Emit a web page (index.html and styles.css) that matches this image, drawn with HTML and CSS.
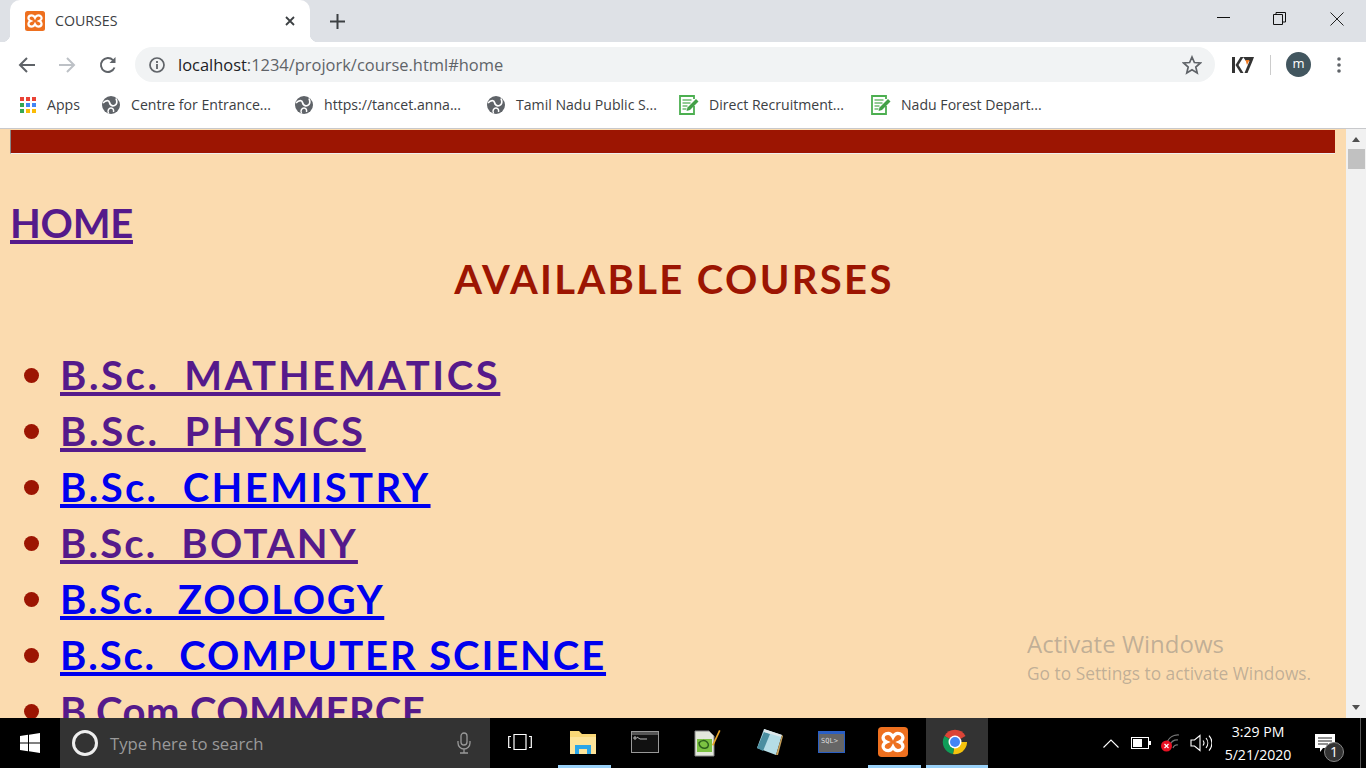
FILE: index.html
```html
<!DOCTYPE html>
<html lang="en">
  <head>
    <meta charset="UTF-8" />
    <title>COURSES</title>
    <link rel="stylesheet" href="styles.css">
  </head>
  <body>
    <svg class="defs">
      <symbol id="xampp" viewBox="0 0 20 20">
        <rect x="0" y="0" width="20" height="20" rx="2.500" fill="#ee701f"/>
        <path d="M6.800 4.300C4.500 4.300 3.400 5.800 3.400 7.200c0 1.300.9 2.200 2.300 2.800-1.400.6-2.300 1.500-2.300 2.800 0 1.400 1.100 2.900 3.400 2.900 1.500 0 2.500-1 3.200-2.400.7 1.400 1.700 2.400 3.200 2.400 2.300 0 3.400-1.500 3.400-2.900 0-1.300-.9-2.200-2.300-2.800 1.400-.6 2.300-1.500 2.300-2.800 0-1.400-1.100-2.900-3.400-2.900-1.500 0-2.500 1-3.200 2.400-.7-1.400-1.700-2.400-3.200-2.400z" fill="none" stroke="#fff" stroke-width="2.200"/>
      </symbol>
      <symbol id="globe" viewBox="0 0 18 18">
        <circle cx="9" cy="9" r="9" fill="#5f6368"/>
        <path d="M1 7c3-3 6-3 6.500-.5S10 10.500 12.500 9.500 15.500 6 14 2.500" fill="none" stroke="#fff" stroke-width="1.700"/>
        <path d="M6.500 17.500c-1.500-3 .5-5.500 2.500-5.500s3 1.800 2.500 4" fill="none" stroke="#fff" stroke-width="1.500"/>
      </symbol>
      <symbol id="doc" viewBox="0 0 20 20">
        <path d="M15 4V1H1v18h14v-8" fill="none" stroke="#4caf50" stroke-width="1.800"/>
        <path d="M3.500 5h9M3.500 8h8M3.500 11h5M3.500 14h4" stroke="#6dbb70" stroke-width="1.400"/>
        <path d="M7.500 16l1-3.500 8.500-8.500 2.500 2.500-8.500 8.500z" fill="#43a047"/>
      </symbol>
    </svg>

    <div class="tabstrip">
      <div class="tab">
        <svg class="tab-icon"><use href="#xampp"/></svg>
        <span class="tab-title">COURSES</span>
        <svg class="tab-close" viewBox="0 0 10 10"><path d="M1 1l8 8M9 1l-8 8" stroke="#3c4043" stroke-width="1.800"/></svg>
      </div>
      <svg class="new-tab" viewBox="0 0 15 15"><path d="M7.500 0v15M0 7.500h15" stroke="#3c4043" stroke-width="2"/></svg>
      <div class="win-controls">
        <svg viewBox="0 0 46 14"><path d="M17 5.500h13" stroke="#111" stroke-width="1"/></svg>
        <svg viewBox="0 0 46 14"><path d="M17.500 2.500h9v10h-9zM20 2.500V.5h9.500v9.500h-3" fill="none" stroke="#111" stroke-width="1"/></svg>
        <svg viewBox="0 0 46 14"><path d="M16.500 .5l13 13M29.500 .5l-13 13" stroke="#222" stroke-width="1"/></svg>
      </div>
    </div>

    <div class="toolbar">
      <svg class="nav-btn" viewBox="0 0 20 20"><path d="M18 10H3M10 3l-7 7 7 7" fill="none" stroke="#5f6368" stroke-width="2"/></svg>
      <svg class="nav-btn" viewBox="0 0 20 20"><path d="M2 10h15M10 3l7 7-7 7" fill="none" stroke="#bdc1c6" stroke-width="2"/></svg>
      <svg class="nav-btn reload" viewBox="0 0 20 20"><path d="M16.500 12.500a7 7 0 1 1-1.500-7.400" fill="none" stroke="#5f6368" stroke-width="2"/><path d="M17.500 2v6h-6z" fill="#5f6368"/></svg>
      <div class="omnibox">
        <svg class="info" viewBox="0 0 16 16"><circle cx="8" cy="8" r="7" fill="none" stroke="#5f6368" stroke-width="1.700"/><path d="M8 7v5M8 4v2" stroke="#5f6368" stroke-width="1.800"/></svg>
        <span class="url"><span class="host">localhost</span>:1234/projork/course.html#home</span>
        <svg class="star" viewBox="0 0 20 20"><path d="M10 2l2.400 5.500 6 .5-4.600 4 1.400 5.900L10 14.800l-5.200 3.100 1.400-5.900-4.600-4 6-.5z" fill="none" stroke="#5f6368" stroke-width="1.700"/></svg>
      </div>
      <svg class="k7" viewBox="0 0 22 18">
        <path d="M0 1h3v16H0zM3.500 9l5-8h3l-5 8 5 8h-3z" fill="#333"/>
        <path d="M11 1h11l-1.500 4H14z" fill="#333"/>
        <path d="M13.500 4h4l-2.500 5z" fill="#f47b20"/>
        <path d="M17.500 5h3l-5 12h-3z" fill="#333"/>
      </svg>
      <span class="tool-divider"></span>
      <span class="avatar">m</span>
      <svg class="dots" viewBox="0 0 4 18"><circle cx="2" cy="3" r="1.800"/><circle cx="2" cy="9" r="1.800"/><circle cx="2" cy="15" r="1.800"/></svg>
    </div>

    <div class="bookmarks">
      <a class="bookmark">
        <svg class="apps" viewBox="0 0 16 16">
          <g fill="#ea4335"><rect x="0" y="0" width="4" height="4"/><rect x="6" y="0" width="4" height="4"/><rect x="12" y="0" width="4" height="4"/></g>
          <g fill="#34a853"><rect x="0" y="6" width="4" height="4"/></g>
          <g fill="#4285f4"><rect x="6" y="6" width="4" height="4"/><rect x="12" y="6" width="4" height="4"/></g>
          <g fill="#34a853"><rect x="0" y="12" width="4" height="4"/></g>
          <g fill="#fbbc05"><rect x="6" y="12" width="4" height="4"/><rect x="12" y="12" width="4" height="4"/></g>
        </svg>
        Apps
      </a>
      <a class="bookmark"><svg class="mark-icon"><use href="#globe"/></svg>Centre for Entrance...</a>
      <a class="bookmark"><svg class="mark-icon"><use href="#globe"/></svg>https://tancet.anna...</a>
      <a class="bookmark"><svg class="mark-icon"><use href="#globe"/></svg>Tamil Nadu Public S...</a>
      <a class="bookmark"><svg class="mark-icon doc"><use href="#doc"/></svg>Direct Recruitment...</a>
      <a class="bookmark"><svg class="mark-icon doc"><use href="#doc"/></svg>Nadu Forest Depart...</a>
    </div>

    <div class="viewport">
      <div class="page">
        <div class="top-bar"></div>
        <a class="home visited" href="#home">HOME</a>
        <h1>AVAILABLE COURSES</h1>
        <ul class="courses">
          <li><a class="visited" href="#">B.Sc.&nbsp; MATHEMATICS</a></li>
          <li><a class="visited" href="#">B.Sc.&nbsp; PHYSICS</a></li>
          <li><a class="fresh" href="#">B.Sc.&nbsp; CHEMISTRY</a></li>
          <li><a class="visited" href="#">B.Sc.&nbsp; BOTANY</a></li>
          <li><a class="fresh" href="#">B.Sc.&nbsp; ZOOLOGY</a></li>
          <li><a class="fresh" href="#">B.Sc.&nbsp; COMPUTER SCIENCE</a></li>
          <li><a class="visited" href="#">B.Com COMMERCE</a></li>
        </ul>
        <div class="activate">
          <div class="activate-title">Activate Windows</div>
          <div class="activate-sub">Go to Settings to activate Windows.</div>
        </div>
      </div>
      <div class="scrollbar">
        <span class="arrow-up"></span>
        <span class="thumb"></span>
        <span class="arrow-down"></span>
      </div>
    </div>

    <div class="taskbar">
      <div class="start">
        <svg viewBox="0 0 20 20" width="20" height="20"><path d="M0 3l8-1.200V9.500H0zM9 1.700L20 0v9.500H9zM0 10.500h8v7.700L0 17zM9 10.500h11V20L9 18.300z" fill="#fff"/></svg>
      </div>
      <div class="search">
        <span class="cortana"></span>
        <span class="search-text">Type here to search</span>
        <svg class="mic" viewBox="0 0 16 22"><rect x="5" y="1" width="6" height="12" rx="3" fill="none" stroke="#999" stroke-width="1.300"/><path d="M2 9v2a6 6 0 0 0 12 0V9M8 17v4M4 21h8" fill="none" stroke="#999" stroke-width="1.300"/></svg>
      </div>
      <div class="task task-view"><svg viewBox="0 0 24 18" width="24" height="18"><path d="M6 1.500h12v15H6zM3 3.500H.7v11H3M21 3.500h2.300v11H21" fill="none" stroke="#fff" stroke-width="1.200"/></svg></div>
      <div class="task running">
        <svg viewBox="0 0 28 26" width="28" height="26"><path d="M1 2h9l3 3h14v20H1z" fill="#f9d776"/><path d="M1 8h26v17H1z" fill="#fde49a"/><path d="M6 25v-9h16v9h-4v-5h-8v5z" fill="#2aa6e8"/></svg>
      </div>
      <div class="task">
        <svg viewBox="0 0 28 22" width="28" height="22"><rect x=".5" y=".5" width="27" height="21" fill="#111" stroke="#999"/><rect x="1" y="1" width="26" height="3" fill="#555"/><path d="M3 6h2v2H3zM6 6l3 2M9 8h7" stroke="#bbb" stroke-width="1" fill="none"/></svg>
      </div>
      <div class="task">
        <svg viewBox="0 0 30 30" width="30" height="30"><path d="M3 4h14l5 5v20H3z" fill="#e4e8dc" stroke="#888"/><path d="M5 12h15v13H5z" fill="#7cc242"/><path d="M7 16c2-3 6-3 8-1s2 5-1 6-7-1-7-5z" fill="none" stroke="#2d5f1c" stroke-width="1.500"/><path d="M20 18l7-15 1.500 .8-7 15z" fill="#e8a526"/></svg>
      </div>
      <div class="task">
        <svg viewBox="0 0 28 28" width="28" height="28"><path d="M9 1l18 6-6 20L2 20z" fill="#b5dde6"/><path d="M2 20L9 4l6 2-7 17z" fill="#4a8ea0"/><path d="M9 1l18 6-1 2L9 4z" fill="#dfe8ea"/><path d="M21 27l6-20 1 1-5 19z" fill="#c9a15a"/></svg>
      </div>
      <div class="task">
        <svg viewBox="0 0 27 22" width="27" height="22"><rect x=".5" y=".5" width="26" height="21" fill="#666" stroke="#2a5fc4"/><rect x="1" y="1" width="25" height="2" fill="#2a5fc4"/><text x="3" y="12" class="sql-text">SQL&gt;</text></svg>
      </div>
      <div class="task running">
        <svg width="30" height="30"><use href="#xampp"/></svg>
      </div>
      <div class="task running active">
        <svg viewBox="0 0 28 28" width="28" height="28">
          <path d="M14 14L3.500 8A12 12 0 0 1 24.500 8z" fill="#db4437"/>
          <path d="M14 14h12A12 12 0 0 1 12 26z" fill="#f4c20d"/>
          <path d="M14 14L12 26A12 12 0 0 1 3.500 8z" fill="#0f9d58"/>
          <circle cx="14" cy="14" r="6.500" fill="#fff"/>
          <circle cx="14" cy="14" r="5" fill="#4285f4"/>
        </svg>
      </div>
      <div class="tray">
        <span class="tray-item"><svg viewBox="0 0 16 9" width="16" height="9"><path d="M.5 8.500L8 1l7.500 7.500" fill="none" stroke="#fff" stroke-width="1.100"/></svg></span>
        <span class="tray-item"><svg viewBox="0 0 20 12" width="20" height="12"><rect x=".5" y=".5" width="17" height="11" fill="none" stroke="#fff"/><rect x="2" y="2" width="9" height="8" fill="#fff"/><rect x="18" y="4" width="2" height="4" fill="#fff"/></svg></span>
        <span class="tray-item"><svg viewBox="0 0 20 18" width="20" height="18"><path d="M6 8a12 12 0 0 1 12-7M9 11a8 8 0 0 1 8-5M12 14a4 4 0 0 1 5-3" fill="none" stroke="#777" stroke-width="1.200"/><circle cx="5.500" cy="12" r="5.500" fill="#e81123"/><path d="M3.500 10l4 4M7.500 10l-4 4" stroke="#fff" stroke-width="1.200"/></svg></span>
        <span class="tray-item"><svg viewBox="0 0 22 18" width="22" height="18"><path d="M1 6h3.500L10 1.500v15L4.500 12H1z" fill="none" stroke="#fff" stroke-width="1.100"/><path d="M13 6.500a4 4 0 0 1 0 5M16 4a8 8 0 0 1 0 10M19 1.500a11 11 0 0 1 0 15" fill="none" stroke="#fff" stroke-width="1.100"/></svg></span>
        <div class="clock">
          <div>3:29 PM</div>
          <div>5/21/2020</div>
        </div>
        <div class="notify">
          <svg viewBox="0 0 20 18" width="20" height="18"><path d="M0 0h20v14H8l-3 4v-4H0z" fill="#fff"/><path d="M3 4h14M3 7h14M3 10h10" stroke="#222" stroke-width="1"/></svg>
          <span class="notify-count">1</span>
        </div>
        <span class="show-desktop"></span>
      </div>
    </div>
  </body>
</html>
```

FILE: styles.css
```css
body {
  font-family: "Open Sans", sans-serif;
  margin: 0;
  padding: 0;
  width: 1366px;
  height: 768px;
  overflow: hidden;
  display: flex;
  flex-direction: column;
  background-color: #fff;
}
.defs {
  display: none;
}

/* tab strip */
.tabstrip {
  height: 42px;
  flex: none;
  display: flex;
  align-items: center;
  padding-left: 10px;
  background-color: #dee1e6;
}
.tab {
  position: relative;
  width: 300px;
  height: 42px;
  box-sizing: border-box;
  padding: 0 13px 0 15px;
  display: flex;
  align-items: center;
  background-color: #fff;
  border-radius: 10px 10px 0 0;
}
.tab::before,
.tab::after {
  content: "";
  position: absolute;
  bottom: 0;
  width: 8px;
  height: 8px;
}
.tab::before {
  left: -8px;
  background: radial-gradient(circle at 0 0, transparent 8px, #fff 8.5px);
}
.tab::after {
  right: -8px;
  background: radial-gradient(circle at 100% 0, transparent 8px, #fff 8.5px);
}
.tab-icon {
  width: 20px;
  height: 20px;
  flex: none;
}
.tab-title {
  flex: 1;
  margin: -2px 0 0 10px;
  font-size: 14.2px;
  color: #3c4043;
}
.tab-close {
  width: 10px;
  height: 10px;
  margin-right: 2px;
}
.new-tab {
  width: 15px;
  height: 15px;
  margin-left: 20px;
}
.win-controls {
  margin-left: auto;
  display: flex;
  align-self: flex-start;
  margin-top: 12px;
  padding-right: 6px;
  gap: 10px;
}
.win-controls svg {
  width: 46px;
  height: 14px;
}
.win-controls svg:last-child {
  margin-left: 2px;
}

/* address bar */
.toolbar {
  height: 43px;
  flex: none;
  box-sizing: border-box;
  padding: 2px 0 0 17px;
  display: flex;
  align-items: center;
  background-color: #fff;
}
.nav-btn {
  width: 20px;
  height: 20px;
  margin-right: 20px;
}
.reload {
  margin-left: 1px;
  margin-right: 19px;
}
.omnibox {
  width: 1080px;
  height: 35px;
  margin-left: -2px;
  flex: none;
  box-sizing: border-box;
  padding: 0 13px 0 14px;
  display: flex;
  align-items: center;
  border-radius: 18px;
  background-color: #f1f3f4;
}
.info {
  width: 16px;
  height: 16px;
  flex: none;
}
.url {
  flex: 1;
  margin-left: 13px;
  font-size: 16.45px;
  color: #5f6368;
}
.host {
  color: #202124;
}
.star {
  width: 20px;
  height: 20px;
}
.k7 {
  width: 22px;
  height: 18px;
  margin-left: 17px;
}
.tool-divider {
  width: 1px;
  height: 20px;
  margin-left: 16px;
  background-color: #ccc;
}
.avatar {
  width: 25px;
  height: 25px;
  margin-left: 15px;
  border-radius: 50%;
  background-color: #42565f;
  color: #fff;
  font-size: 13px;
  line-height: 23px;
  text-align: center;
}
.dots {
  width: 4px;
  height: 18px;
  margin-left: 26px;
  fill: #5f6368;
}

/* bookmarks */
.bookmarks {
  height: 43px;
  flex: none;
  box-sizing: border-box;
  padding-left: 20px;
  padding-bottom: 4px;
  display: grid;
  grid-template-columns: 82px 193px 192px 192px 192px 192px;
  align-items: center;
  background-color: #fff;
}
.bookmark {
  display: flex;
  align-items: center;
  font-size: 14.1px;
  color: #3c4043;
  white-space: nowrap;
}
.apps {
  width: 16px;
  height: 16px;
  margin-right: 11px;
}
.mark-icon {
  width: 18px;
  height: 18px;
  margin-right: 11px;
  flex: none;
}
.mark-icon.doc {
  width: 20px;
  height: 20px;
  margin-right: 10px;
}

/* page */
.viewport {
  flex: 1;
  min-height: 0;
  display: flex;
  border-top: 1px solid #c8c9cc;
}
.page {
  position: relative;
  flex: 1;
  min-width: 0;
  overflow: hidden;
  box-sizing: border-box;
  padding: 1px 11px 0 10px;
  background-color: #fbdbaf;
  font-family: "Lato", "Comic Sans MS", sans-serif;
  font-size: 40px;
  line-height: 56px;
  font-weight: 700;
  color: #9c1502;
}
.top-bar {
  height: 23px;
  background-color: #9c1502;
  border-left: 1px solid #888;
  border-bottom: 1px solid #eee;
}
.home {
  display: inline-block;
  margin-top: 41px;
  vertical-align: top;
  letter-spacing: -0.25px;
}
.visited {
  color: #551a8b;
}
.fresh {
  color: #0000ee;
}
h1 {
  margin: 0;
  font-size: 40px;
  font-weight: 700;
  text-align: center;
  letter-spacing: 2.35px;
  padding-left: 3px;
}
.courses {
  margin: 40px 0 0;
  padding-left: 50px;
  list-style: none;
}
.courses li {
  display: flex;
  align-items: center;
}
.courses li::before {
  content: "";
  width: 15px;
  height: 15px;
  flex: none;
  margin: 0 21.5px 0 -36.5px;
  border-radius: 50%;
  background-color: #9c1502;
}
/* the list labels are stretched to the widths in the screenshot */
.courses li:nth-child(1) a { letter-spacing: 2.6px; }
.courses li:nth-child(2) a { letter-spacing: 2.65px; }
.courses li:nth-child(3) a { letter-spacing: 2.4px; }
.courses li:nth-child(4) a { letter-spacing: 2.2px; }
.courses li:nth-child(5) a { letter-spacing: 1.7px; }
.courses li:nth-child(6) a { letter-spacing: 1.9px; }
.courses li:nth-child(7) a { letter-spacing: 0.45px; }
.activate {
  position: absolute;
  left: 1027px;
  top: 498px;
  font-family: "Open Sans", sans-serif;
  font-weight: 400;
  color: rgba(120, 120, 120, 0.45);
  line-height: normal;
}
.activate-title {
  font-size: 24px;
  margin-bottom: 1px;
}
.activate-sub {
  font-size: 17.35px;
}

/* scrollbar */
.scrollbar {
  width: 20px;
  flex: none;
  display: flex;
  flex-direction: column;
  align-items: center;
  background-color: #f1f1f1;
}
.arrow-up,
.arrow-down {
  width: 0;
  height: 0;
  border-left: 4.5px solid transparent;
  border-right: 4.5px solid transparent;
}
.arrow-up {
  margin-top: 8px;
  border-bottom: 5px solid #505050;
}
.arrow-down {
  margin: auto 0 8px;
  border-top: 5px solid #505050;
}
.thumb {
  width: 17px;
  height: 20px;
  margin-top: 7px;
  background-color: #c1c1c1;
}

/* taskbar */
.taskbar {
  height: 50px;
  flex: none;
  display: flex;
  align-items: stretch;
  background-color: #000;
}
.start {
  width: 60px;
  display: flex;
  align-items: center;
  justify-content: center;
}
.search {
  width: 430px;
  box-sizing: border-box;
  padding: 0 18px 0 12px;
  display: flex;
  align-items: center;
  background-color: #333;
}
.cortana {
  width: 20px;
  height: 20px;
  border: 3px solid #eee;
  border-radius: 50%;
}
.search-text {
  flex: 1;
  margin-left: 12px;
  font-size: 16.7px;
  color: #9a9a9a;
}
.mic {
  width: 16px;
  height: 22px;
}
.task {
  width: 62px;
  box-sizing: border-box;
  padding-right: 3px;
  display: flex;
  align-items: center;
  justify-content: center;
  border-bottom: 3px solid transparent;
}
.task-view {
  width: 63.5px;
  padding-right: 4px;
}
.running {
  border-image: linear-gradient(to right, transparent 5px, #99d1f8 5px, #99d1f8 calc(100% - 6px), transparent calc(100% - 6px)) 1;
}
.active {
  background-color: #333;
  border-image: none;
  border-bottom-color: #99d1f8;
}
.sql-text {
  font-family: "DejaVu Sans Mono", monospace;
  font-size: 7px;
  fill: #ddd;
}
.tray {
  margin-left: auto;
  display: flex;
  align-items: center;
}
.tray-item {
  width: 30px;
  display: flex;
  justify-content: center;
}
.clock {
  width: 84px;
  text-align: center;
  font-size: 14.1px;
  line-height: 23px;
  color: #fff;
}
.notify {
  position: relative;
  width: 50px;
  display: flex;
  justify-content: center;
}
.notify-count {
  position: absolute;
  left: 24px;
  top: 8px;
  width: 20px;
  height: 20px;
  box-sizing: border-box;
  border: 1px solid #888;
  border-radius: 50%;
  background-color: #333;
  color: #fff;
  font-size: 14px;
  line-height: 18px;
  text-align: center;
}
.show-desktop {
  width: 6px;
  height: 100%;
  margin-left: 10px;
  border-left: 1px solid #555;
  box-sizing: border-box;
}
```
